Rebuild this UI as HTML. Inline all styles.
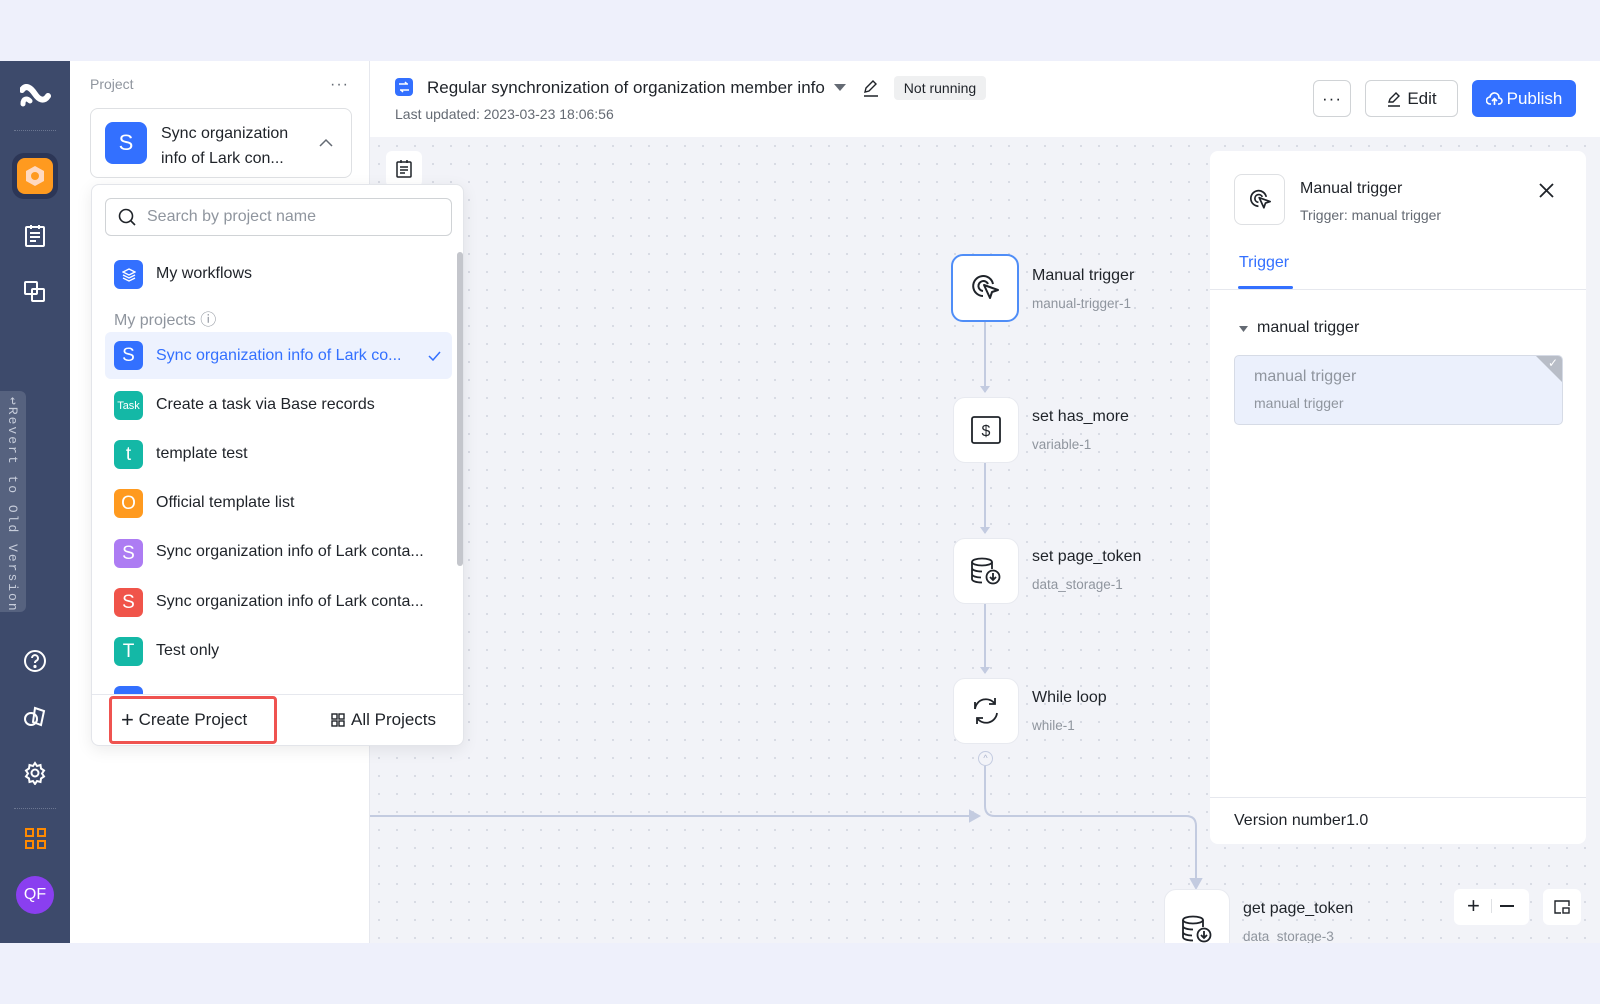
<!DOCTYPE html>
<html><head><meta charset="utf-8">
<style>
*{box-sizing:border-box;margin:0;padding:0}
body{width:1600px;height:1004px;background:#eef0fb;font-family:"Liberation Sans",sans-serif;position:relative;overflow:hidden;color:#1f2329}
.a{position:absolute}
.side{left:0;top:61px;width:70px;height:882px;background:#3d4a6b}
.proj{left:70px;top:61px;width:300px;height:882px;background:#fff;border-right:1px solid #e6e8ee}
.canvas{left:370px;top:137px;width:1230px;height:806px;background-color:#f2f3f8;background-image:radial-gradient(#d6d9e2 1px,transparent 1.2px);background-size:18px 18px}
.header{left:370px;top:61px;width:1230px;height:76px;background:#fff}
.node{width:66px;height:66px;background:#fff;border-radius:12px;border:1px solid #e8eaf0;display:flex;align-items:center;justify-content:center}
.nt{font-size:16px;color:#1f2329}
.ns{font-size:13.5px;color:#8f959e}
.ic{width:29px;height:29px;border-radius:6px;color:#fff;font-size:19px;display:flex;align-items:center;justify-content:center}
.it{font-size:16px;color:#1f2329}
.vline{width:2px;background:#c3cbe0}
.btn{border:1px solid #d0d3d6;border-radius:6px;background:#fff;display:flex;align-items:center;justify-content:center;font-size:17px}
</style></head><body>
<div class="a side"></div>
<svg class="a" style="left:20px;top:84px" width="31" height="24" viewBox="0 0 31 24"><path d="M2 6c4-6 9-2 13 4s9 8 13 2" stroke="#fff" stroke-width="6" fill="none" stroke-linecap="round"/><path d="M3 20c0-6 4-6 7-3" stroke="#fff" stroke-width="5" fill="none" stroke-linecap="round"/></svg>
<div class="a" style="left:14px;top:130px;width:42px;border-top:1px dotted #6b7691"></div>
<div class="a" style="left:12px;top:153px;width:46px;height:46px;border-radius:12px;background:#2c3656"></div>
<div class="a" style="left:17px;top:158px;width:36px;height:36px;border-radius:8px;background:#ff9a1f"></div>
<svg class="a" style="left:23px;top:164px" width="24" height="24" viewBox="0 0 24 24"><path d="M12 2l9 5v10l-9 5-9-5V7z" fill="#ffd9c0"/><circle cx="12" cy="12" r="4" fill="#ff9a1f"/></svg>
<svg class="a" style="left:24px;top:224px" width="22" height="24" viewBox="0 0 22 24" fill="none" stroke="#fff" stroke-width="2"><rect x="2" y="3" width="18" height="19" rx="1"/><path d="M6 9h10M6 13h10M6 17h6M7 1v4M15 1v4"/></svg>
<svg class="a" style="left:24px;top:281px" width="22" height="22" viewBox="0 0 22 22" fill="none" stroke="#fff" stroke-width="2"><rect x="1" y="1" width="12" height="12" rx="1"/><rect x="8" y="8" width="12" height="12" rx="1"/></svg>
<div class="a" style="left:0;top:391px;width:26px;height:221px;background:#56627f;border-radius:0 6px 6px 0"></div>
<div class="a" style="left:5px;top:397px;writing-mode:vertical-rl;font-size:13px;letter-spacing:2px;color:#c7cddb;font-family:'Liberation Mono',monospace">↩Revert to Old Version</div>
<svg class="a" style="left:23px;top:649px" width="24" height="24" viewBox="0 0 24 24" fill="none" stroke="#fff" stroke-width="2"><circle cx="12" cy="12" r="10"/><path d="M9 9a3 3 0 1 1 4 3c-1 .5-1 1-1 2"/><circle cx="12" cy="17.5" r=".6" fill="#fff"/></svg>
<svg class="a" style="left:23px;top:705px" width="24" height="24" viewBox="0 0 24 24" fill="none" stroke="#fff" stroke-width="2"><circle cx="8" cy="14" r="6"/><path d="M12 3l9 3-3 14-8-3z"/></svg>
<svg class="a" style="left:23px;top:761px" width="24" height="24" viewBox="0 0 24 24" fill="none" stroke="#fff" stroke-width="2"><circle cx="12" cy="12" r="3.5"/><path d="M12 2l2 3 3.5-1 .5 3.5 3 2-2 3 2 3-3 2-.5 3.5-3.5-1-2 3-2-3-3.5 1-.5-3.5-3-2 2-3-2-3 3-2 .5-3.5 3.5 1z"/></svg>
<div class="a" style="left:14px;top:808px;width:42px;border-top:1px dotted #6b7691"></div>
<svg class="a" style="left:25px;top:828px" width="21" height="21" viewBox="0 0 21 21" fill="none" stroke="#ff8a00" stroke-width="2"><rect x="1" y="1" width="7" height="7"/><rect x="13" y="1" width="7" height="7"/><rect x="1" y="13" width="7" height="7"/><rect x="13" y="13" width="7" height="7"/></svg>
<div class="a" style="left:16px;top:876px;width:38px;height:38px;border-radius:50%;background:#8a3ff0;color:#fff;font-size:16px;display:flex;align-items:center;justify-content:center">QF</div>

<div class="a proj"></div>
<div class="a" style="left:90px;top:76px;font-size:14px;color:#8f959e">Project</div>
<div class="a" style="left:330px;top:76px;font-size:16px;color:#646a73;letter-spacing:1px">···</div>
<div class="a" style="left:90px;top:108px;width:262px;height:70px;border:1px solid #dee0e3;border-radius:8px"></div>
<div class="a ic" style="left:105px;top:122px;width:42px;height:42px;background:#3370ff;font-size:22px;border-radius:8px">S</div>
<div class="a" style="left:161px;top:121px;font-size:16px;line-height:25px">Sync organization<br>info of Lark con...</div>
<svg class="a" style="left:319px;top:138px" width="14" height="9" viewBox="0 0 14 9"><path d="M1 8l6-6 6 6" stroke="#646a73" stroke-width="1.5" fill="none"/></svg>

<div class="a canvas"></div>
<div class="a header"></div>
<div class="a" style="left:395px;top:78px;width:18px;height:18px;border-radius:4px;background:#3370ff"></div>
<svg class="a" style="left:398px;top:81px" width="12" height="12" viewBox="0 0 12 12" fill="none" stroke="#fff" stroke-width="1.5"><path d="M1 3h9M7 1l2 2M11 9H2M5 11l-2-2"/></svg>
<div class="a" style="left:427px;top:78px;font-size:17px">Regular synchronization of organization member info</div>
<svg class="a" style="left:834px;top:84px" width="12" height="8" viewBox="0 0 12 8"><path d="M0 0h12L6 7z" fill="#646a73"/></svg>
<svg class="a" style="left:862px;top:79px" width="18" height="18" viewBox="0 0 18 18" fill="none" stroke="#1f2329" stroke-width="1.4"><path d="M3 13l1-4 7-7 3 3-7 7zM2 17h14"/></svg>
<div class="a" style="left:894px;top:76px;width:92px;height:24px;border-radius:4px;background:#eff0f1;font-size:14px;display:flex;align-items:center;justify-content:center;color:#1f2329">Not running</div>
<div class="a" style="left:395px;top:106px;font-size:14px;color:#646a73">Last updated: 2023-03-23 18:06:56</div>
<div class="a btn" style="left:1313px;top:80px;width:38px;height:37px;letter-spacing:1px">···</div>
<div class="a btn" style="left:1365px;top:80px;width:93px;height:37px"><svg width="16" height="16" viewBox="0 0 16 16" fill="none" stroke="#1f2329" stroke-width="1.4" style="margin-right:5px"><path d="M3 11l1-3 6-6 3 3-6 6zM2 15h12"/></svg>Edit</div>
<div class="a" style="left:1472px;top:80px;width:104px;height:37px;border-radius:6px;background:#3370ff;color:#fff;font-size:17px;display:flex;align-items:center;justify-content:center"><svg width="17" height="14" viewBox="0 0 17 14" fill="none" stroke="#fff" stroke-width="1.6" style="margin-right:4px"><path d="M5 12H4a3.5 3.5 0 0 1 0-7 4.5 4.5 0 0 1 9 1 3 3 0 0 1 0 6h-1M8.5 13V7M6 9l2.5-2.5L11 9"/></svg>Publish</div>

<div class="a" style="left:386px;top:151px;width:36px;height:36px;background:#fff;border-radius:6px"></div>
<svg class="a" style="left:396px;top:160px" width="16" height="18" viewBox="0 0 16 18" fill="none" stroke="#1f2329" stroke-width="1.5"><rect x="1" y="2" width="14" height="15" rx="1"/><path d="M4 7h8M4 10h8M4 13h5M5 0v3M11 0v3"/></svg>

<div class="a vline" style="left:984px;top:322px;height:70px"></div>
<div class="a" style="left:980px;top:386px;border:5px solid transparent;border-top:7px solid #c3cbe0"></div>
<div class="a vline" style="left:984px;top:462px;height:71px"></div>
<div class="a" style="left:980px;top:527px;border:5px solid transparent;border-top:7px solid #c3cbe0"></div>
<div class="a vline" style="left:984px;top:603px;height:70px"></div>
<div class="a" style="left:980px;top:667px;border:5px solid transparent;border-top:7px solid #c3cbe0"></div>
<div class="a" style="left:978px;top:751px;width:15px;height:15px;border:1px solid #c3cbe0;border-radius:50%;background:#f2f3f8;font-size:9px;color:#aab3cc;text-align:center;line-height:13px">^</div>
<svg class="a" style="left:370px;top:766px" width="840" height="125" viewBox="0 0 840 125" fill="none" stroke="#c3cbe0" stroke-width="2"><path d="M0 50h600"/><path d="M615 0v40q0 10 10 10h191q10 0 10 10v54"/><path d="M600 45l9 5-9 5z" fill="#c3cbe0"/><path d="M821 113l5 9 5-9z" fill="#c3cbe0"/></svg>

<div class="a node" style="left:951px;top:254px;width:68px;height:68px;border:2px solid #4f8df7"><svg width="36" height="36" viewBox="0 0 36 36" fill="none" stroke="#1f2329" stroke-width="2"><path d="M26 14a10 10 0 1 0-10 12"/><path d="M21 14a5 5 0 1 0-5 7"/><path d="M17 15l14 5-6 2-2 6z" stroke-linejoin="round"/></svg></div>
<div class="a nt" style="left:1032px;top:267px">Manual trigger</div><div class="a ns" style="left:1032px;top:296px">manual-trigger-1</div>
<div class="a node" style="left:953px;top:397px"><svg width="30" height="28" viewBox="0 0 30 28" fill="none" stroke="#1f2329" stroke-width="1.8"><rect x="1" y="1" width="28" height="26" rx="2"/><text x="15" y="20" font-size="16" text-anchor="middle" fill="#1f2329" stroke="none" font-family="Liberation Sans">$</text></svg></div>
<div class="a nt" style="left:1032px;top:408px">set has_more</div><div class="a ns" style="left:1032px;top:437px">variable-1</div>
<div class="a node" style="left:953px;top:538px"><svg width="32" height="28" viewBox="0 0 32 28" fill="none" stroke="#1f2329" stroke-width="1.8"><ellipse cx="12" cy="5" rx="10" ry="3.5"/><path d="M2 5v17c0 2 4 3.5 10 3.5M22 5v7M2 11c0 2 4 3.5 10 3.5M2 17c0 2 4 3.5 9 3.5"/><circle cx="23" cy="20" r="6.5"/><path d="M23 16v7M20 20l3 3 3-3"/></svg></div>
<div class="a nt" style="left:1032px;top:548px">set page_token</div><div class="a ns" style="left:1032px;top:577px">data_storage-1</div>
<div class="a node" style="left:953px;top:678px"><svg width="30" height="30" viewBox="0 0 30 30" fill="none" stroke="#1f2329" stroke-width="1.8"><path d="M4 13a11 11 0 0 1 20-5M26 17a11 11 0 0 1-20 5"/><path d="M4 6v7h0M24 2v6h-6M6 28v-6h6"/></svg></div>
<div class="a nt" style="left:1032px;top:689px">While loop</div><div class="a ns" style="left:1032px;top:718px">while-1</div>
<div class="a node" style="left:1164px;top:889px;height:80px"><svg width="32" height="28" viewBox="0 0 32 28" fill="none" stroke="#1f2329" stroke-width="1.8"><ellipse cx="12" cy="5" rx="10" ry="3.5"/><path d="M2 5v17c0 2 4 3.5 10 3.5M22 5v7M2 11c0 2 4 3.5 10 3.5M2 17c0 2 4 3.5 9 3.5"/><circle cx="23" cy="20" r="6.5"/><path d="M23 16v7M20 20l3 3 3-3"/></svg></div>
<div class="a nt" style="left:1243px;top:900px">get page_token</div><div class="a ns" style="left:1243px;top:929px">data_storage-3</div>
<div class="a" style="left:1454px;top:889px;width:75px;height:36px;background:#fff;border-radius:6px;font-size:22px;color:#1f2329"><span class="a" style="left:13px;top:4px">+</span><span class="a" style="left:37px;top:10px;height:14px;border-left:1px solid #dee0e3"></span><span class="a" style="left:46px;top:16px;width:14px;border-top:2px solid #1f2329"></span></div>
<div class="a" style="left:1543px;top:889px;width:38px;height:36px;background:#fff;border-radius:6px"><svg class="a" style="left:11px;top:11px" width="16" height="14" viewBox="0 0 16 14" fill="none" stroke="#1f2329" stroke-width="1.4"><path d="M15 6V1H1v12h6"/><rect x="9" y="8" width="6" height="5"/></svg></div>
<div class="a" style="left:0;top:943px;width:1600px;height:61px;background:#eef0fb"></div>

<div class="a" style="left:1210px;top:151px;width:376px;height:693px;background:#fff;border-radius:8px"></div>
<div class="a" style="left:1234px;top:174px;width:51px;height:51px;border:1px solid #dee0e3;border-radius:8px;display:flex;align-items:center;justify-content:center"><svg width="28" height="28" viewBox="0 0 36 36" fill="none" stroke="#1f2329" stroke-width="2.2"><path d="M26 14a10 10 0 1 0-10 12"/><path d="M21 14a5 5 0 1 0-5 7"/><path d="M17 15l14 5-6 2-2 6z" stroke-linejoin="round"/></svg></div>
<div class="a" style="left:1300px;top:180px;font-size:16px">Manual trigger</div>
<div class="a" style="left:1300px;top:207px;font-size:14px;color:#646a73">Trigger: manual trigger</div>
<svg class="a" style="left:1539px;top:183px" width="15" height="15" viewBox="0 0 15 15" stroke="#1f2329" stroke-width="1.8"><path d="M1 1l13 13M14 1L1 14"/></svg>
<div class="a" style="left:1239px;top:254px;font-size:16px;color:#3370ff">Trigger</div>
<div class="a" style="left:1238px;top:286px;width:55px;height:3px;background:#3370ff;border-radius:2px"></div>
<div class="a" style="left:1210px;top:289px;width:376px;border-top:1px solid #e6e8ee"></div>
<svg class="a" style="left:1239px;top:326px" width="9" height="6" viewBox="0 0 9 6"><path d="M0 0h9L4.5 6z" fill="#646a73"/></svg>
<div class="a" style="left:1257px;top:319px;font-size:16px">manual trigger</div>
<div class="a" style="left:1234px;top:355px;width:329px;height:70px;background:#ebf0fc;border:1px solid #d6dbe6;border-radius:5px;overflow:hidden"><div class="a" style="right:-1px;top:-1px;border-top:28px solid #b8bdc7;border-left:28px solid transparent"></div><div class="a" style="right:4px;top:0;color:#fff;font-size:12px">✓</div></div>
<div class="a" style="left:1254px;top:368px;font-size:16px;color:#8f959e">manual trigger</div>
<div class="a" style="left:1254px;top:395px;font-size:14px;color:#8f959e">manual trigger</div>
<div class="a" style="left:1210px;top:797px;width:376px;border-top:1px solid #e6e8ee"></div>
<div class="a" style="left:1234px;top:812px;font-size:16px">Version number1.0</div>

<div class="a" style="left:91px;top:184px;width:373px;height:562px;background:#fff;border:1px solid #e3e5ea;border-radius:8px;box-shadow:0 4px 16px rgba(0,0,0,.08)"></div>
<div class="a" style="left:105px;top:198px;width:347px;height:38px;border:1px solid #d0d3d6;border-radius:6px"></div>
<svg class="a" style="left:118px;top:208px" width="18" height="18" viewBox="0 0 18 18" fill="none" stroke="#1f2329" stroke-width="1.6"><circle cx="8" cy="8" r="6.5"/><path d="M13 13l4 4"/></svg>
<div class="a" style="left:147px;top:208px;font-size:16px;color:#8f959e">Search by project name</div>
<div class="a ic" style="left:114px;top:260px;background:#3370ff"><svg width="14" height="14" viewBox="0 0 14 14" fill="none" stroke="#fff" stroke-width="1.4"><path d="M7 1l6 3-6 3-6-3zM1 7l6 3 6-3M1 10l6 3 6-3"/></svg></div>
<div class="a it" style="left:156px;top:265px">My workflows</div>
<div class="a" style="left:114px;top:306px;font-size:16px;color:#8f959e">My projects ⓘ</div>
<div class="a" style="left:105px;top:332px;width:347px;height:47px;background:#edf2fe;border-radius:6px"></div>
<div class="a ic" style="left:114px;top:341px;background:#3370ff">S</div>
<div class="a it" style="left:156px;top:347px;color:#3370ff">Sync organization info of Lark co...</div>
<svg class="a" style="left:428px;top:351px" width="13" height="10" viewBox="0 0 13 10"><path d="M1 5l4 4 7-8" stroke="#3370ff" stroke-width="1.5" fill="none"/></svg>
<div class="a ic" style="left:114px;top:391px;background:#14b8a6;font-size:11px">Task</div>
<div class="a it" style="left:156px;top:396px">Create a task via Base records</div>
<div class="a ic" style="left:114px;top:440px;background:#14b8a6">t</div>
<div class="a it" style="left:156px;top:445px">template test</div>
<div class="a ic" style="left:114px;top:489px;background:#ff9a1f">O</div>
<div class="a it" style="left:156px;top:494px">Official template list</div>
<div class="a ic" style="left:114px;top:539px;background:#ad7cf3">S</div>
<div class="a it" style="left:156px;top:543px">Sync organization info of Lark conta...</div>
<div class="a ic" style="left:114px;top:588px;background:#f0544a">S</div>
<div class="a it" style="left:156px;top:593px">Sync organization info of Lark conta...</div>
<div class="a ic" style="left:114px;top:637px;background:#14b8a6">T</div>
<div class="a it" style="left:156px;top:642px">Test only</div>
<div class="a" style="left:114px;top:686px;width:29px;height:8px;background:#3370ff;border-radius:6px 6px 0 0"></div>
<div class="a" style="left:457px;top:252px;width:6px;height:314px;background:#c4c6cc;border-radius:3px"></div>
<div class="a" style="left:92px;top:694px;width:371px;border-top:1px solid #e6e8ee"></div>
<div class="a" style="left:109px;top:696px;width:168px;height:48px;border:3px solid #ef5350;border-radius:4px"></div>
<div class="a" style="left:121px;top:707px;font-size:17px"><span style="font-size:22px;font-weight:300;vertical-align:-2px">+</span> Create Project</div>
<svg class="a" style="left:331px;top:713px" width="14" height="14" viewBox="0 0 14 14" fill="none" stroke="#1f2329" stroke-width="1.4"><rect x="1" y="1" width="5" height="5"/><rect x="8" y="1" width="5" height="5"/><rect x="1" y="8" width="5" height="5"/><rect x="8" y="8" width="5" height="5"/></svg>
<div class="a" style="left:351px;top:710px;font-size:17px">All Projects</div>
</body></html>
